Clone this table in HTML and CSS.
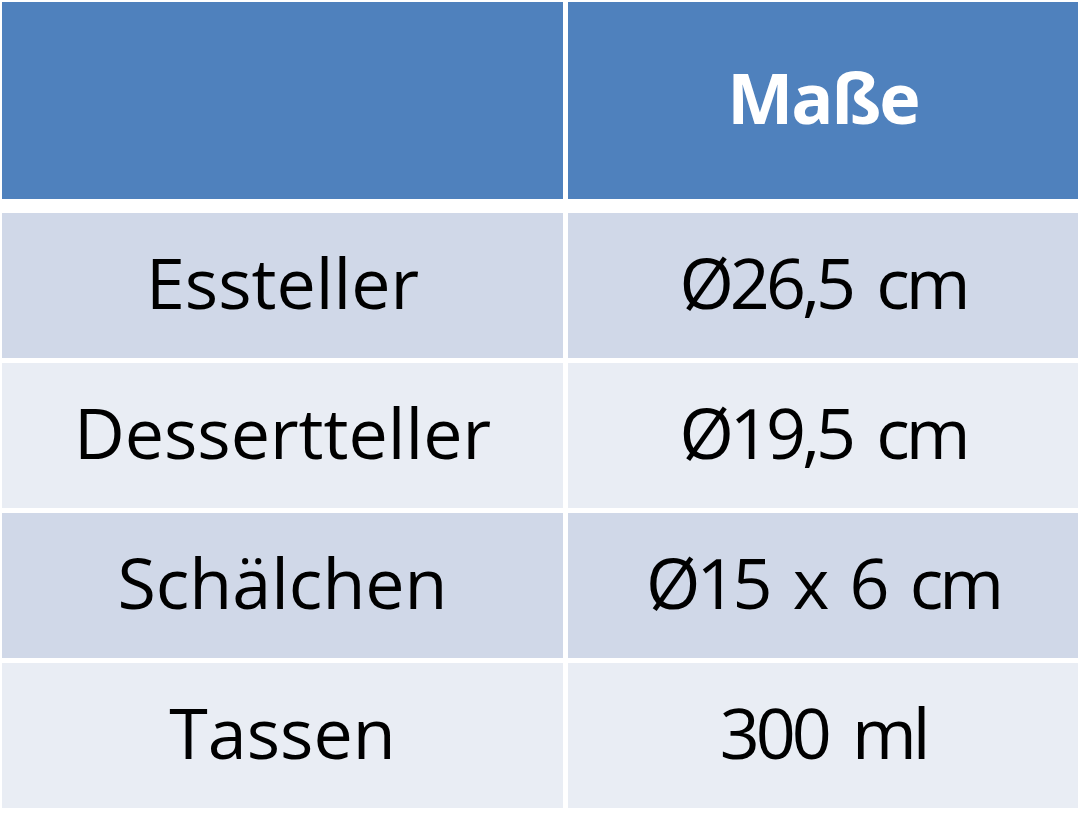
FILE: index.html
```html
<!DOCTYPE html>
<html lang="de">
<head>
<meta charset="utf-8">
<link rel="stylesheet" href="styles.css">
</head>
<body>
<div class="table">
  <div class="row head">
    <div class="cell"></div>
    <div class="cell value">Maße</div>
  </div>
  <div class="body">
    <div class="row odd">
      <div class="cell">Essteller</div>
      <div class="cell value">Ø26,5 cm</div>
    </div>
    <div class="row even">
      <div class="cell">Dessertteller</div>
      <div class="cell value">Ø19,5 cm</div>
    </div>
    <div class="row odd">
      <div class="cell">Schälchen</div>
      <div class="cell value">Ø15 x 6 cm</div>
    </div>
    <div class="row even">
      <div class="cell">Tassen</div>
      <div class="cell value">300 ml</div>
    </div>
  </div>
</div>
</body>
</html>
```
FILE: styles.css
```css
html, body {
  margin: 0;
  padding: 0;
  background: #ffffff;
}
body {
  padding: 2px;
  font-family: "Open Sans", "Noto Sans", sans-serif;
  color: #000;
}
.table {
  width: 1076px;
}
.row {
  display: grid;
  grid-template-columns: 561px 510px;
  column-gap: 5px;
}
.cell {
  display: flex;
  align-items: center;
  justify-content: center;
  font-size: 70px;
  letter-spacing: 0;
  line-height: 1;
  padding-bottom: 8px;
  box-sizing: border-box;
}
.cell.value {
  letter-spacing: -4px;
  word-spacing: 10px;
}
.head .cell {
  height: 197px;
  background: #4f81bd;
  color: #ffffff;
  font-weight: 700;
}
.head .cell.value {
  letter-spacing: -2px;
  word-spacing: 0;
}
.body {
  margin-top: 14px;
  display: flex;
  flex-direction: column;
  gap: 5px;
}
.body .cell {
  height: 145px;
}
.odd .cell {
  background: #d0d8e8;
}
.even .cell {
  background: #e9edf4;
}
```
